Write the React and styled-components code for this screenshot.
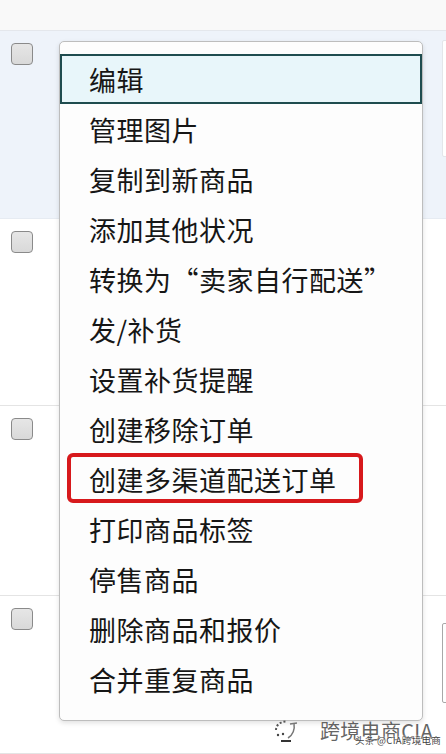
import React from "react";
import styled, { createGlobalStyle } from "styled-components";

const Global = createGlobalStyle`
  html, body { margin: 0; padding: 0; background: #ffffff; }
  body { font-family: "Noto Sans CJK SC", "Noto Sans", sans-serif; }
`;

const Page = styled.div`
  position: relative;
  width: 446px;
  height: 754px;
  overflow: hidden;
  background: #ffffff;
`;

const TopBand = styled.div`
  height: 30px;
  background: #f9f9f9;
  border-bottom: 1px solid #e4e7ec;
`;

const Row = styled.div`
  height: ${(p) => p.$h}px;
  display: flex;
  align-items: flex-start;
  justify-content: space-between;
  padding-left: 11px;
  background: ${(p) => (p.$active ? "#eef3fa" : "#ffffff")};
  border-bottom: 1px solid ${(p) => (p.$active ? "#e6ebf2" : "#e4e4e4")};
  box-sizing: border-box;
`;

const Checkbox = styled.div`
  margin-top: 12px;
  width: 22px;
  height: 22px;
  box-sizing: border-box;
  border: 1.5px solid #8a8a8a;
  border-radius: 4px;
  background: linear-gradient(#e6e6e6, #d9d9d9);
`;

const SideBox = styled.div`
  margin-top: ${(p) => p.$top}px;
  width: 20px;
  height: ${(p) => p.$height}px;
  margin-right: -16px;
  box-sizing: border-box;
  background: #ffffff;
  border: 1px solid ${(p) => p.$border};
  border-radius: 2px;
`;

const Menu = styled.div`
  position: absolute;
  left: 59px;
  top: 41px;
  width: 364px;
  box-sizing: border-box;
  padding: 12px 0 16px;
  background: #fdfdfd;
  border: 1px solid #bdbdbd;
  border-radius: 5px;
  box-shadow: 0 2px 5px rgba(0, 0, 0, 0.12);
  display: flex;
  flex-direction: column;
`;

const Item = styled.div`
  position: relative;
  height: 50px;
  box-sizing: border-box;
  display: flex;
  align-items: center;
  padding-left: ${(p) => (p.$selected ? 27 : 29)}px;
  font-size: 27px;
  letter-spacing: 0.5px;
  color: #161616;
  white-space: nowrap;
  background: ${(p) => (p.$selected ? "#e8f6fa" : "transparent")};
  border: ${(p) => (p.$selected ? "2px solid #1f4c4f" : "none")};

  ${(p) =>
    p.$marked &&
    `
    &::after {
      content: "";
      position: absolute;
      left: 7px;
      width: 296px;
      top: -1px;
      height: 50px;
      box-sizing: border-box;
      border: 4px solid #d7191c;
      border-radius: 6px;
    }
  `}
`;

const Watermark = styled.div`
  position: absolute;
  left: 272px;
  top: 716px;
  display: flex;
  align-items: center;
  gap: 18px;
  pointer-events: none;
`;

const WmTitle = styled.div`
  position: relative;
  font-size: 20px;
  letter-spacing: 0.3px;
  color: #4a4a4a;
  text-shadow: 0 0 1px #ffffff, 1px 1px 0 #ffffff;
  opacity: 0.85;
`;

const WmSub = styled.div`
  position: absolute;
  left: 35px;
  top: 17px;
  font-size: 9.5px;
  color: #222;
  white-space: nowrap;
  text-shadow: 0 0 2px #fff, 0 0 2px #fff;
`;

const items = [
  "编辑",
  "管理图片",
  "复制到新商品",
  "添加其他状况",
  "转换为“卖家自行配送”",
  "发/补货",
  "设置补货提醒",
  "创建移除订单",
  "创建多渠道配送订单",
  "打印商品标签",
  "停售商品",
  "删除商品和报价",
  "合并重复商品",
];

export default function App() {
  return (
    <Page>
      <Global />
      <TopBand />
      <Row $active $h={188}>
        <Checkbox />
        <SideBox $top={9} $height={117} $border="#e3e6ea" />
      </Row>
      <Row $h={187}>
        <Checkbox />
      </Row>
      <Row $h={190}>
        <Checkbox />
      </Row>
      <Row $h={158}>
        <Checkbox />
        <SideBox $top={27} $height={80} $border="#a8a8a8" />
      </Row>
      <Menu>
        {items.map((t, i) => (
          <Item key={t} $selected={i === 0} $marked={i === 8}>
            {t}
          </Item>
        ))}
      </Menu>
      <Watermark>
        <svg width="30" height="26" viewBox="0 0 30 26" fill="none">
          <path
            d="M4 12c0-5 4.5-8.5 10-8.5"
            stroke="#555"
            strokeWidth="2"
            strokeDasharray="2 2"
          />
          <path d="M18 6l7-1" stroke="#777" strokeWidth="1.5" />
          <path d="M22 6c1 5-1 11-6 14" stroke="#777" strokeWidth="1.5" />
          <path d="M9 23h10" stroke="#333" strokeWidth="2" />
          <circle cx="6" cy="17" r="1.2" fill="#444" />
          <circle cx="11" cy="16" r="1.2" fill="#444" />
        </svg>
        <WmTitle>
          跨境电商CIA
          <WmSub>头条 @CIA跨境电商</WmSub>
        </WmTitle>
      </Watermark>
    </Page>
  );
}
